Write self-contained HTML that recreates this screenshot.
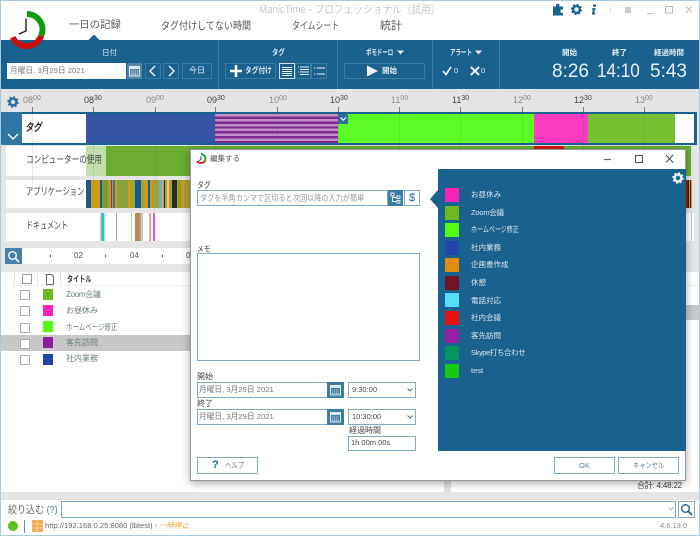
<!DOCTYPE html>
<html lang="ja"><head><meta charset="utf-8"><title>ManicTime</title>
<style>
html,body{margin:0;padding:0;width:700px;height:536px;overflow:hidden;background:#fff}
body{position:relative;font-family:"Liberation Sans","Noto Sans CJK JP",sans-serif;font-size:8px;color:#555}
div,span.a{position:absolute;box-sizing:border-box}
.t{position:absolute;white-space:nowrap;line-height:12px;transform-origin:0 50%}
.w{color:#e3edf3}
.b{border:1px solid #3a7aa3}
.fb{border:1px solid #7fa9c4;background:#fff}
.s{width:14px;height:14px;left:445px}
.p{position:absolute;left:471px;color:#dbe7ef;font-size:7.500px;white-space:nowrap;line-height:12px;transform-origin:0 50%}
.tl{position:absolute;top:94px;font-size:9px;color:#8a8a8a;line-height:12px;white-space:nowrap}
.tl sup{font-size:7px;line-height:0;vertical-align:3px;margin-left:0}
.tl.d{color:#444}
.tk{position:absolute;top:107px;width:1px;height:78px;background:rgba(70,70,70,.12)}
.tk2{position:absolute;top:107px;width:1px;height:5px;background:#777}
.lb{position:absolute;background:#fff}
svg{position:absolute;overflow:visible}
.cb{position:absolute;left:20px;width:10px;height:10px;border:1px solid #aaa;background:#fff}
.sw{position:absolute;left:43px;width:10px;height:11px}
.ti{position:absolute;left:66px;color:#6a7f7f;font-size:8px;line-height:12px;white-space:nowrap;transform-origin:0 50%}
</style></head><body>
<svg width="0" height="0" style="position:absolute"><defs>
<g id="gear"><circle r="3.400" fill="none" stroke="currentColor" stroke-width="2.400"/><circle r="4.900" fill="none" stroke="currentColor" stroke-width="1.600" stroke-dasharray="1.900 1.950"/></g>
<g id="cal"><rect x=".5" y="1.5" width="10" height="9.5" fill="none" stroke="currentColor"/><rect x=".5" y="1.5" width="10" height="2.5" fill="currentColor"/><path d="M2 6h7M2 8h7M2 9.7h7" stroke="currentColor" stroke-width=".8" stroke-dasharray="1.2 .7"/></g>
</defs></svg>

<!-- window edge -->
<div style="left:0;top:0;width:700px;height:1px;background:#a8cbe0"></div>

<!-- title + nav -->
<span class="t" style="left:259px;top:4px;font-size:11px;transform:scaleX(.88);color:#c8c8c8">ManicTime - プロフェッショナル（試用）</span>
<span class="t" style="left:69px;top:20px;font-size:10.400px;color:#555">一日の記録</span>
<span class="t" style="left:161px;top:20px;font-size:10.500px;transform:scaleX(.86);color:#555">タグ付けしてない時間</span>
<span class="t" style="left:292px;top:20px;font-size:10.500px;transform:scaleX(.75);color:#555">タイムシート</span>
<span class="t" style="left:380px;top:20px;font-size:11px;color:#555">統計</span>
<svg style="left:88px;top:34px" width="12" height="7"><path d="M0 6.500L6 .5L12 6.500Z" fill="#19618f"/></svg>

<!-- top right icons -->
<svg style="left:552px;top:3px;color:#19618f" width="70" height="16">
<path d="M1 3.500h3V2.500a1.700 1.700 0 0 1 3.400 0V3.500H11v3h-1a1.700 1.700 0 0 0 0 3.400h1V12.500H1Z" fill="#19618f"/>
<use href="#gear" x="24.500" y="6.500"/>
<path d="M41 1.500h3v2.200h-3ZM40.300 5h3.200l-1.300 5h1.100v1.500h-3.600l1.300-5h-1Z" fill="#19618f"/>
</svg>
<div style="left:610px;top:5px;width:1px;height:9px;background:#e0e0e0"></div>
<svg style="left:625px;top:5px" width="70" height="12"><rect x="0" y="2" width="6" height="6" fill="#ccc"/><path d="M22 8.500h6" stroke="#bbb"/><rect x="40.500" y="1.500" width="7" height="6.500" fill="none" stroke="#bbb"/><path d="M61 1.500l6 6M67 1.500l-6 6" stroke="#bbb"/></svg>

<!-- ribbon -->
<div style="left:0;top:40px;width:700px;height:49px;background:#19618f"></div>
<div style="left:218px;top:40px;width:1px;height:49px;background:#3a7ba5"></div>
<div style="left:337px;top:40px;width:1px;height:49px;background:#3a7ba5"></div>
<div style="left:432px;top:40px;width:1px;height:49px;background:#3a7ba5"></div>
<div style="left:499px;top:40px;width:1px;height:49px;background:#3a7ba5"></div>

<!-- logo -->
<svg style="left:0;top:0" width="60" height="50">
<path d="M27 14A15.500 15.500 0 0 1 41.200 35.700" fill="none" stroke="#0e9a12" stroke-width="6"/>
<path d="M41.200 35.700A15.500 15.500 0 0 1 12.600 37.300" fill="none" stroke="#c91010" stroke-width="6"/>
<path d="M26 18.500V31L19 34" fill="none" stroke="#111" stroke-width="1.300"/>
</svg>

<span class="t w" style="left:102px;top:47px;font-size:7.500px">日付</span>
<div style="left:7px;top:63px;width:119px;height:16px;background:#fff"></div>
<span class="t" style="left:10px;top:65px;font-size:7.700px;color:#777">月曜日, 3月29日 2021</span>
<div style="left:127px;top:63px;width:15px;height:16px;background:#4f86aa"></div>
<svg style="left:129px;top:65px;color:#dfe9f0" width="12" height="12"><use href="#cal"/></svg>
<div class="b" style="left:145px;top:63px;width:16px;height:16px"></div>
<svg style="left:145px;top:63px" width="16" height="16"><path d="M10 3L5 8L10 13" fill="none" stroke="#eaf1f5" stroke-width="1.500"/></svg>
<div class="b" style="left:163px;top:63px;width:16px;height:16px"></div>
<svg style="left:163px;top:63px" width="16" height="16"><path d="M6 3L11 8L6 13" fill="none" stroke="#eaf1f5" stroke-width="1.500"/></svg>
<div class="b" style="left:182px;top:63px;width:30px;height:16px"></div>
<span class="t w" style="left:189px;top:65px;font-size:8px">今日</span>

<span class="t w" style="left:272px;top:47px;font-size:8px;transform:scaleX(.8);font-weight:bold">タグ</span>
<div class="b" style="left:225px;top:63px;width:51px;height:16px"></div>
<svg style="left:229px;top:64px" width="14" height="14"><path d="M7 1V13M1 7H13" stroke="#fff" stroke-width="2.500"/></svg>
<span class="t w" style="left:245px;top:65px;font-size:8px;transform:scaleX(.84);font-weight:bold">タグ付け</span>
<div style="left:279px;top:63px;width:16px;height:16px;border:1px solid #cfe0ea"></div>
<div class="b" style="left:295px;top:63px;width:16px;height:16px"></div>
<div class="b" style="left:311px;top:63px;width:16px;height:16px"></div>
<svg style="left:279px;top:63px" width="48" height="16"><path d="M3 4.500h10M3 6.500h10M3 8.500h10M3 10.500h10M3 12.500h10" stroke="#e8f0f5" stroke-width="1"/><path d="M19 4h1M21 4h9M21 6.500h9M19 9h1M21 9h9M21 11.500h9" stroke="#e8f0f5" stroke-width="1.100"/><path d="M35 5h1.500M38 5h8M35 11h1.500M38 11h8" stroke="#e8f0f5" stroke-width="1.100"/></svg>

<span class="t w" style="left:366px;top:47px;font-size:8px;transform:scaleX(.68);font-weight:bold">ポモドーロ</span>
<svg style="left:397px;top:50px" width="8" height="6"><path d="M0 .5H7L3.500 4.500Z" fill="#e3edf3"/></svg>
<div class="b" style="left:344px;top:63px;width:81px;height:16px"></div>
<svg style="left:367px;top:65px" width="12" height="12"><path d="M0 .5L11 6L0 11.500Z" fill="#eef4f8"/></svg>
<span class="t w" style="left:382px;top:65px;font-size:7.500px;font-weight:bold">開始</span>

<span class="t w" style="left:450px;top:47px;font-size:8px;transform:scaleX(.69);font-weight:bold">アラート</span>
<svg style="left:475px;top:50px" width="8" height="6"><path d="M0 .5H7L3.500 4.500Z" fill="#e3edf3"/></svg>
<svg style="left:443px;top:66px" width="60" height="10"><path d="M0 5L3 8.500L8 1" fill="none" stroke="#eef4f8" stroke-width="1.600"/><path d="M28 1L36 9M36 1L28 9" stroke="#eef4f8" stroke-width="2"/></svg>
<span class="t w" style="left:454px;top:65px;font-size:7.500px">0</span>
<span class="t w" style="left:481px;top:65px;font-size:7.500px">0</span>

<span class="t w" style="left:562px;top:47px;font-size:7.500px;font-weight:bold">開始</span>
<span class="t w" style="left:612px;top:47px;font-size:7.500px;font-weight:bold">終了</span>
<span class="t w" style="left:654px;top:47px;font-size:7.500px;font-weight:bold">経過時間</span>
<span class="t" style="left:552px;top:61px;font-size:19px;line-height:22px;color:#eaf1f6">8:26</span>
<span class="t" style="left:597px;top:61px;font-size:19px;line-height:22px;transform:scaleX(.9);color:#eaf1f6">14:10</span>
<span class="t" style="left:650px;top:61px;font-size:19px;line-height:22px;color:#eaf1f6">5:43</span>

<!-- timeline area background -->
<div style="left:0;top:89px;width:700px;height:403px;background:#e5e5e5"></div>
<div style="left:0;top:89px;width:700px;height:23px;background:#e4e4e4"></div>
<svg style="left:6px;top:95px;color:#2a6ca0" width="14" height="14"><use href="#gear" x="7" y="7"/></svg>

<span class="tl" style="left:23px">08<sup>00</sup></span>
<span class="tl d" style="left:84px">08<sup>30</sup></span>
<span class="tl" style="left:146px">09<sup>00</sup></span>
<span class="tl d" style="left:207px">09<sup>30</sup></span>
<span class="tl" style="left:269px">10<sup>00</sup></span>
<span class="tl d" style="left:330px">10<sup>30</sup></span>
<span class="tl" style="left:391px">11<sup>00</sup></span>
<span class="tl d" style="left:452px">11<sup>30</sup></span>
<span class="tl" style="left:513px">12<sup>00</sup></span>
<span class="tl d" style="left:574px">12<sup>30</sup></span>
<span class="tl" style="left:635px">13<sup>00</sup></span>

<!-- tag row -->
<div style="left:0;top:112px;width:697px;height:33px;background:#19618f"></div>
<div style="left:1px;top:112px;width:21px;height:33px;background:#2f76a4"></div>
<svg style="left:7px;top:133px" width="12" height="8"><path d="M1 1L6 6L11 1" fill="none" stroke="#fff" stroke-width="1.300"/></svg>
<div class="lb" style="left:22px;top:114px;width:64px;height:29px"></div>
<span class="t" style="left:25px;top:122px;font-size:11px;transform:scaleX(.75);font-weight:bold;font-style:italic;color:#222">タグ</span>
<div style="left:86px;top:114px;width:129px;height:29px;background:#3654a5"></div>
<div style="left:215px;top:114px;width:123px;height:29px;background:repeating-linear-gradient(to bottom,#c08fc6 0,#c08fc6 2.500px,#7b2a8e 2.500px,#7b2a8e 4.900px)"></div>
<div style="left:338px;top:114px;width:196px;height:29px;background:#5efc26"></div>
<div style="left:534px;top:114px;width:54px;height:29px;background:#fd3bc0"></div>
<div style="left:588px;top:114px;width:87px;height:29px;background:#73c030"></div>
<div style="left:675px;top:114px;width:19px;height:29px;background:#fff"></div>
<div style="left:338px;top:114px;width:10px;height:10px;background:#2c6fa0"></div>
<svg style="left:340px;top:117px" width="7" height="5"><path d="M.5 .5L3.200 3.200L6 .5" fill="none" stroke="#fff" stroke-width="1.200"/></svg>

<!-- computer row -->
<div class="lb" style="left:6px;top:146px;width:80px;height:30px"></div>
<div style="left:86px;top:146px;width:20px;height:30px;background:#c0dfab"></div>
<div style="left:106px;top:146px;width:585px;height:30px;background:#6aad30"></div>
<div style="left:534px;top:146px;width:30px;height:3px;background:#d81515"></div>
<span class="t" style="left:26px;top:155px;font-size:10px;transform:scaleX(.76);color:#444">コンピューターの使用</span>

<!-- apps row -->
<div class="lb" style="left:6px;top:180px;width:80px;height:28px"></div>
<svg style="left:86px;top:180px" width="110" height="28"><rect width="110" height="28" fill="#a3a23a"/>
<rect x="0" width="5" height="28" fill="#1b5a88"/><rect x="5" width="9" height="28" fill="#cb9a18"/><rect x="14" width="2" height="28" fill="#1b5a88"/><rect x="16" width="6" height="28" fill="#7a9a38"/><rect x="25" width="1" height="28" fill="#e01535"/><rect x="27" width="2" height="28" fill="#2b7ab8"/><rect x="29" width="2" height="28" fill="#cb9a18"/><rect x="31" width="11" height="28" fill="#89a23a"/><rect x="42" width="2" height="28" fill="#cb9a18"/><rect x="49" width="6" height="28" fill="#1b5a88"/><rect x="58" width="3" height="28" fill="#cb9a18"/><rect x="62" width="2" height="28" fill="#1b5a88"/><rect x="64" width="2" height="28" fill="#cb9a18"/><rect x="73" width="3" height="28" fill="#6cb0d8"/><rect x="76" width="1" height="28" fill="#e0b020"/><rect x="78" width="1" height="28" fill="#2222aa"/><rect x="81" width="2" height="28" fill="#e8c870"/><rect x="86" width="5" height="28" fill="#2b2b18"/><rect x="92" width="3" height="28" fill="#8a9a30"/><rect x="95" width="3" height="28" fill="#cb9a18"/><rect x="100" width="4" height="28" fill="#b0a030"/></svg>
<svg style="left:686px;top:180px" width="6" height="28"><rect width="6" height="28" fill="#d9a020"/><rect x="0" width="2" height="28" fill="#a81010"/><rect x="2" width="1" height="28" fill="#222"/><rect x="4" width="1" height="28" fill="#333"/></svg>
<span class="t" style="left:26px;top:187px;font-size:10px;transform:scaleX(.73);color:#444">アプリケーション</span>

<!-- docs row -->
<div class="lb" style="left:6px;top:213px;width:184px;height:28px"></div>
<span class="t" style="left:26px;top:221px;font-size:10px;transform:scaleX(.7);color:#444">ドキュメント</span>
<svg style="left:86px;top:213px" width="104" height="28">
<rect x="14.500" width="1.200" height="28" fill="#d88a90"/><rect x="15.700" width="2.500" height="28" fill="#18c8d8"/><rect x="18.500" width="1" height="28" fill="#a5e8ef"/><rect x="30" width="1" height="28" fill="#d89a90"/><rect x="45" width="1" height="28" fill="#a0e0c0"/><rect x="49" width="3" height="28" fill="#c88050"/><rect x="52" width="1.500" height="28" fill="#7a9a80"/><rect x="53.500" width="2" height="28" fill="#d89a60"/><rect x="56" width="1" height="28" fill="#8fd0c0"/><rect x="63" width="2" height="28" fill="#d8a8a0"/><rect x="67" width="2" height="28" fill="#e060c8"/></svg>
<div style="left:686px;top:213px;width:8px;height:28px;background:#fff"></div>
<div style="left:691px;top:213px;width:1px;height:28px;background:#a0d0c0"></div>

<!-- zoom row -->
<div class="lb" style="left:22px;top:248px;width:170px;height:16px"></div>
<div style="left:5px;top:248px;width:17px;height:16px;background:#4680aa"></div>
<svg style="left:7px;top:250px" width="13" height="13"><circle cx="5.500" cy="5.500" r="3.800" fill="none" stroke="#fff" stroke-width="1.400"/><path d="M8.300 8.300L12 12" stroke="#fff" stroke-width="1.800"/></svg>
<div style="left:50px;top:255px;width:1px;height:2px;background:#444"></div>
<div style="left:105px;top:255px;width:1px;height:2px;background:#444"></div>
<div style="left:162px;top:255px;width:1px;height:2px;background:#444"></div>
<span class="t" style="left:74px;top:250px;font-size:8px;color:#555">02</span>
<span class="t" style="left:130px;top:250px;font-size:8px;color:#555">04</span>
<span class="t" style="left:186px;top:250px;font-size:8px;color:#555">06</span>

<!-- list -->
<div class="lb" style="left:1px;top:272px;width:698px;height:220px"></div>
<div style="left:1px;top:285px;width:698px;height:1px;background:#eee"></div>
<div style="left:14px;top:273px;width:1px;height:12px;background:#ddd"></div>
<div style="left:37px;top:273px;width:1px;height:12px;background:#ddd"></div>
<div style="left:60px;top:273px;width:1px;height:12px;background:#ddd"></div>
<div style="left:22px;top:274px;width:10px;height:10px;border:1px solid #999;background:#fff"></div>
<svg style="left:46px;top:274px" width="8" height="11"><path d="M.5 .5H5.500L7.500 2.500V10.500H.5Z" fill="#fff" stroke="#666"/></svg>
<span class="t" style="left:67px;top:273px;font-size:8.500px;transform:scaleX(.72);font-weight:bold;color:#333">タイトル</span>

<div style="left:1px;top:335px;width:190px;height:16px;background:#c8c8c8"></div>
<div style="left:686px;top:305px;width:13px;height:15px;background:#c8c8c8"></div>

<div class="cb" style="top:290px"></div><div class="sw" style="top:289px;background:#6cbb1e"></div><span class="ti" style="top:289px;letter-spacing:-.3px">Zoom会議</span>
<div class="cb" style="top:306px"></div><div class="sw" style="top:305px;background:#fd22b8"></div><span class="ti" style="top:305px">お昼休み</span>
<div class="cb" style="top:323px"></div><div class="sw" style="top:321px;background:#55fb12"></div><span class="ti" style="top:321px;font-size:8.500px;transform:scaleX(.76)">ホームページ修正</span>
<div class="cb" style="top:339px"></div><div class="sw" style="top:337px;background:#8e1ea0"></div><span class="ti" style="top:337px">客先訪問</span>
<div class="cb" style="top:355px"></div><div class="sw" style="top:354px;background:#2145a8"></div><span class="ti" style="top:353px">社内業務</span>

<!-- bottom of list -->
<div style="left:444px;top:481px;width:7px;height:12px;background:#e2e2e2"></div>
<span class="t" style="left:637px;top:480px;font-size:8px;letter-spacing:-.2px;color:#444">合計: 4:48:22</span>

<!-- filter + status -->
<div style="left:0;top:492px;width:700px;height:8px;background:#e5e5e5"></div>
<div style="left:0;top:500px;width:700px;height:36px;background:#fff"></div>
<span class="t" style="left:8px;top:504px;font-size:10.500px;transform:scaleX(.86);color:#666">絞り込む <span style="color:#4a7fa5">(?)</span></span>
<div class="fb" style="left:61px;top:501px;width:615px;height:17px"></div>
<svg style="left:668px;top:507px" width="6" height="4"><path d="M.5 .5L3 3L5.500 .5" fill="none" stroke="#aaa"/></svg>
<div class="fb" style="left:678px;top:501px;width:17px;height:17px"></div>
<svg style="left:680px;top:503px" width="13" height="13"><circle cx="5.500" cy="5.500" r="3.800" fill="none" stroke="#19618f" stroke-width="1.400"/><path d="M8.300 8.300L12 12" stroke="#19618f" stroke-width="1.800"/></svg>
<div style="left:8px;top:521px;width:10px;height:10px;border-radius:50%;background:#5cbf1c"></div>
<div style="left:24px;top:520px;width:1px;height:13px;background:#5a94bb"></div>
<svg style="left:32px;top:520px" width="12" height="12"><rect width="11" height="12" rx="1" fill="#f3a84c"/><path d="M0 4h11M0 8h11M5 0v12" stroke="#fde3bb" stroke-width=".8"/></svg>
<span class="t" style="left:45px;top:520px;font-size:7.600px;color:#666">http://192.168.0.25:8080 (lbtest) -</span>
<span class="t" style="left:159px;top:520px;font-size:7.500px;font-style:italic;color:#f2a33a">一時停止</span>
<span class="t" style="left:660px;top:520px;font-size:7.500px;color:#888">4.6.13.0</span>
<div style="left:0;top:0;width:1px;height:536px;background:#a8cbe0"></div>
<div style="left:699px;top:0;width:1px;height:536px;background:#a8cbe0"></div>
<div style="left:0;top:535px;width:700px;height:1px;background:#a8cbe0"></div>

<!-- vertical gridlines -->
<div class="tk" style="left:32px"></div><div class="tk2" style="left:32px"></div>
<div class="tk" style="left:93px"></div><div class="tk2" style="left:93px"></div>
<div class="tk" style="left:155px"></div><div class="tk2" style="left:155px"></div>
<div class="tk" style="left:215px"></div><div class="tk2" style="left:215px"></div>
<div class="tk" style="left:277px"></div><div class="tk2" style="left:277px"></div>
<div class="tk" style="left:338px"></div><div class="tk2" style="left:338px"></div>
<div class="tk" style="left:399px"></div><div class="tk2" style="left:399px"></div>
<div class="tk" style="left:460px"></div><div class="tk2" style="left:460px"></div>
<div class="tk" style="left:522px"></div><div class="tk2" style="left:522px"></div>
<div class="tk" style="left:583px"></div><div class="tk2" style="left:583px"></div>
<div class="tk" style="left:644px"></div><div class="tk2" style="left:644px"></div>

<!-- dialog -->
<div style="left:190px;top:149px;width:496px;height:332px;background:#fff;border:1px solid #9a9a9a;box-shadow:0 2px 8px rgba(0,0,0,.35)"></div>
<svg style="left:196px;top:153px" width="12" height="12"><path d="M5 1A5 5 0 0 1 9 8" fill="none" stroke="#0e9a12" stroke-width="1.800"/><path d="M9 8A5 5 0 0 1 1 8" fill="none" stroke="#c91010" stroke-width="1.800"/><path d="M5 3V6.500L3 7.500" fill="none" stroke="#111" stroke-width=".8"/></svg>
<span class="t" style="left:210px;top:153px;font-size:7.500px;color:#555">編集する</span>
<svg style="left:604px;top:152px" width="76" height="14"><path d="M0 7.500H7" stroke="#666" stroke-width="1.200"/><rect x="31.500" y="3.500" width="7" height="7" fill="none" stroke="#555" stroke-width="1.100"/><path d="M62 3L69 10.500M69 3L62 10.500" stroke="#444" stroke-width="1"/></svg>

<span class="t" style="left:197px;top:179px;font-size:8.500px;transform:scaleX(.8);color:#444">タグ</span>
<div class="fb" style="left:197px;top:190px;width:191px;height:16px"></div>
<span class="t" style="left:200px;top:192px;font-size:8.500px;transform:scaleX(.84);color:#999">タグを半角カンマで区切ると次回以降の入力が簡単</span>
<div style="left:388px;top:190px;width:15px;height:16px;background:#3f7ca5"></div>
<svg style="left:390px;top:192px" width="11" height="12"><path d="M1 1h3v3H1ZM7 4h3v2.500H7ZM7 8.500h3v2.500H7ZM2.500 4V9.500H7M2.500 5.500H7" fill="none" stroke="#e5eef4" stroke-width=".9"/></svg>
<div class="fb" style="left:404px;top:190px;width:16px;height:16px"></div>
<span class="t" style="left:409px;top:192px;font-size:11px;color:#19618f">$</span>

<span class="t" style="left:197px;top:243px;font-size:8.500px;transform:scaleX(.8);color:#444">メモ</span>
<div class="fb" style="left:197px;top:253px;width:223px;height:108px"></div>

<span class="t" style="left:197px;top:371px;font-size:8px;color:#444">開始</span>
<div class="fb" style="left:197px;top:382px;width:131px;height:16px;border-color:#7fa9c4"></div>
<span class="t" style="left:199px;top:384px;font-size:7.700px;color:#777">月曜日, 3月29日 2021</span>
<div style="left:327px;top:382px;width:17px;height:16px;background:#3f7ca5"></div>
<svg style="left:330px;top:384px;color:#dfe9f0" width="12" height="12"><use href="#cal"/></svg>
<div class="fb" style="left:348px;top:382px;width:68px;height:16px"></div>
<span class="t" style="left:352px;top:384px;font-size:7.500px;color:#444">9:30:00</span>
<svg style="left:407px;top:388px" width="6" height="4"><path d="M.5 .5L3 3L5.500 .5" fill="none" stroke="#666"/></svg>

<span class="t" style="left:197px;top:398px;font-size:8px;color:#444">終了</span>
<div class="fb" style="left:197px;top:409px;width:131px;height:16px"></div>
<span class="t" style="left:199px;top:411px;font-size:7.700px;color:#777">月曜日, 3月29日 2021</span>
<div style="left:327px;top:409px;width:17px;height:16px;background:#3f7ca5"></div>
<svg style="left:330px;top:411px;color:#dfe9f0" width="12" height="12"><use href="#cal"/></svg>
<div class="fb" style="left:348px;top:409px;width:68px;height:16px"></div>
<span class="t" style="left:352px;top:411px;font-size:7.500px;color:#444">10:30:00</span>
<svg style="left:407px;top:415px" width="6" height="4"><path d="M.5 .5L3 3L5.500 .5" fill="none" stroke="#666"/></svg>

<span class="t" style="left:349px;top:425px;font-size:8px;color:#444">経過時間</span>
<div class="fb" style="left:348px;top:436px;width:68px;height:15px"></div>
<span class="t" style="left:351px;top:437px;font-size:7.500px;color:#444">1h 00m 00s</span>

<div class="fb" style="left:197px;top:457px;width:61px;height:17px"></div>
<span class="t" style="left:212px;top:459px;font-size:11px;font-weight:bold;color:#19618f">?</span>
<span class="t" style="left:225px;top:460px;font-size:8px;transform:scaleX(.8);color:#777">ヘルプ</span>
<div class="fb" style="left:554px;top:457px;width:61px;height:17px"></div>
<span class="t" style="left:579px;top:460px;font-size:7.500px;color:#5a7f99">OK</span>
<div class="fb" style="left:618px;top:457px;width:61px;height:17px"></div>
<span class="t" style="left:633px;top:460px;font-size:8px;transform:scaleX(.78);color:#5a7f99">キャンセル</span>

<!-- palette panel -->
<div style="left:438px;top:169px;width:248px;height:282px;background:#19618f"></div>
<svg style="left:430px;top:190px" width="8" height="18"><path d="M8 0V18L0 9Z" fill="#19618f"/></svg>
<svg style="left:671px;top:171px;color:#eef4f8" width="14" height="14"><use href="#gear" x="7" y="7"/></svg>

<div class="s" style="top:188px;background:#fd22b8"></div><span class="p" style="top:189px">お昼休み</span>
<div class="s" style="top:206px;background:#6cbb1e"></div><span class="p" style="top:207px;letter-spacing:-.2px">Zoom会議</span>
<div class="s" style="top:223px;background:#55fb12"></div><span class="p" style="top:224px;font-size:8px;transform:scaleX(.75)">ホームページ修正</span>
<div class="s" style="top:241px;background:#2145a8"></div><span class="p" style="top:242px">社内業務</span>
<div class="s" style="top:258px;background:#e28c0e"></div><span class="p" style="top:259px">企画書作成</span>
<div class="s" style="top:276px;background:#701428"></div><span class="p" style="top:277px">休憩</span>
<div class="s" style="top:293px;background:#58def8"></div><span class="p" style="top:295px">電話対応</span>
<div class="s" style="top:311px;background:#e61212"></div><span class="p" style="top:312px">社内会議</span>
<div class="s" style="top:329px;background:#9a1fa4"></div><span class="p" style="top:330px">客先訪問</span>
<div class="s" style="top:346px;background:#06945e"></div><span class="p" style="top:347px;letter-spacing:-.4px">Skype打ち合わせ</span>
<div class="s" style="top:364px;background:#18c810"></div><span class="p" style="top:365px">test</span>
</body></html>
